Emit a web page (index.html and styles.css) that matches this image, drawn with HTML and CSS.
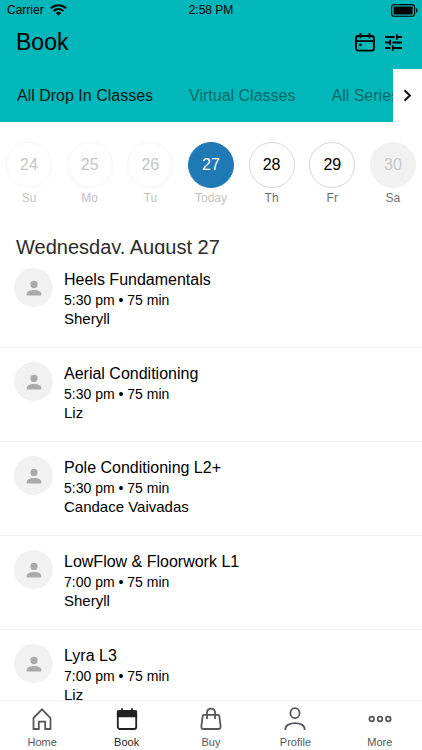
FILE: index.html
```html
<!DOCTYPE html>
<html lang="en">
<head>
    <meta charset="UTF-8">
    <meta name="viewport" content="width=device-width, initial-scale=1.0">
    <title>Book</title>
    <link rel="stylesheet" href="styles.css">
</head>
<body>
    <!-- Shared icon for the instructor avatars -->
    <svg class="icon-defs" aria-hidden="true">
        <symbol id="person" viewBox="0 0 16 16">
            <circle cx="8" cy="4.4" r="3.6"/>
            <path d="M.7 15.4v-1.6c0-2.5 3.6-3.9 7.3-3.9s7.3 1.4 7.3 3.9v1.6z"/>
        </symbol>
    </svg>

    <header class="header">
        <div class="status-bar">
            <div class="carrier">
                <span>Carrier</span>
                <svg width="17" height="12" viewBox="0 0 17 12" fill="none" stroke="#000" stroke-width="2">
                    <path d="M.9 4.3a10.8 10.8 0 0 1 15.2 0M3.6 7.1a6.9 6.9 0 0 1 9.8 0"/>
                    <path d="M8.5 11.8L5.9 9.1a3.7 3.7 0 0 1 5.2 0z" fill="#000" stroke="none"/>
                </svg>
            </div>
            <span class="clock">2:58 PM</span>
            <div class="battery">
                <svg width="27" height="13" viewBox="0 0 27 13">
                    <rect x=".6" y=".6" width="23" height="11.6" rx="2.8" fill="none" stroke="#000" stroke-width="1.1"/>
                    <rect x="2.6" y="2.4" width="19" height="8" rx="1.2"/>
                    <path d="M25 4.2c2 .6 2 3.8 0 4.4z"/>
                </svg>
            </div>
        </div>

        <div class="title-bar">
            <h1>Book</h1>
            <div class="actions">
                <button class="icon-btn" aria-label="Calendar">
                    <svg width="20" height="19" viewBox="0 0 20 19" fill="none" stroke="#000" stroke-width="1.8">
                        <rect x="1" y="3" width="18" height="14.6" rx="2.4"/>
                        <path d="M1 8.2h18M5.5 0v5.2M14.5 0v5.2"/>
                        <circle cx="5.3" cy="11.8" r="1.4" fill="#000" stroke="none"/>
                    </svg>
                </button>
                <button class="icon-btn" aria-label="Filters">
                    <svg width="17" height="17" viewBox="0 0 17 17" fill="none" stroke="#000" stroke-width="1.8">
                        <path d="M0 3h9.5M11.8 3H17M11.8 .3v5.4M0 8.5h5.2M5.2 5.8v5.4M7.6 8.5H17M0 14h5.4M7.8 14H17M7.8 11.3v5.4"/>
                    </svg>
                </button>
            </div>
        </div>

        <nav class="tabs">
            <div class="tab-list">
                <a href="#drop-in" class="tab active">All Drop In Classes</a>
                <a href="#virtual" class="tab">Virtual Classes</a>
                <a href="#series" class="tab">All Series</a>
            </div>
            <button class="tabs-next" aria-label="More tabs">
                <svg width="9" height="13" viewBox="0 0 9 13" fill="none" stroke="#111" stroke-width="2">
                    <path d="M1.5 1.2l5.4 5.3-5.4 5.3"/>
                </svg>
            </button>
        </nav>
    </header>

    <div class="week">
        <button class="day past"><span class="num">24</span><span class="name">Su</span></button>
        <button class="day past"><span class="num">25</span><span class="name">Mo</span></button>
        <button class="day past"><span class="num">26</span><span class="name">Tu</span></button>
        <button class="day today"><span class="num">27</span><span class="name">Today</span></button>
        <button class="day"><span class="num">28</span><span class="name">Th</span></button>
        <button class="day"><span class="num">29</span><span class="name">Fr</span></button>
        <button class="day empty"><span class="num">30</span><span class="name">Sa</span></button>
    </div>

    <h2 class="date-heading">Wednesday, August 27</h2>

    <main class="class-list">
        <article class="class-item">
            <div class="avatar"><svg><use href="#person"/></svg></div>
            <div class="info">
                <h3>Heels Fundamentals</h3>
                <p class="time">5:30 pm • 75 min</p>
                <p class="teacher">Sheryll</p>
            </div>
        </article>
        <article class="class-item">
            <div class="avatar"><svg><use href="#person"/></svg></div>
            <div class="info">
                <h3>Aerial Conditioning</h3>
                <p class="time">5:30 pm • 75 min</p>
                <p class="teacher">Liz</p>
            </div>
        </article>
        <article class="class-item">
            <div class="avatar"><svg><use href="#person"/></svg></div>
            <div class="info">
                <h3>Pole Conditioning L2+</h3>
                <p class="time">5:30 pm • 75 min</p>
                <p class="teacher">Candace Vaivadas</p>
            </div>
        </article>
        <article class="class-item">
            <div class="avatar"><svg><use href="#person"/></svg></div>
            <div class="info">
                <h3>LowFlow &amp; Floorwork L1</h3>
                <p class="time">7:00 pm • 75 min</p>
                <p class="teacher">Sheryll</p>
            </div>
        </article>
        <article class="class-item">
            <div class="avatar"><svg><use href="#person"/></svg></div>
            <div class="info">
                <h3>Lyra L3</h3>
                <p class="time">7:00 pm • 75 min</p>
                <p class="teacher">Liz</p>
            </div>
        </article>
    </main>

    <nav class="bottom-nav">
        <a href="#home" class="nav-item">
            <svg viewBox="0 0 24 24">
                <path d="M3.5 11L12 2.4l8.5 8.6V22h-5.3v-7.4H8.8V22H3.5z"/>
            </svg>
            <span>Home</span>
        </a>
        <a href="#book" class="nav-item active">
            <svg viewBox="0 0 24 24">
                <rect x="2.8" y="4" width="18.4" height="18" rx="2"/>
                <path d="M2.8 4.5h18.4v4.8H2.8z" fill="currentColor"/>
                <path d="M7 1.2v3M17 1.2v3"/>
            </svg>
            <span>Book</span>
        </a>
        <a href="#buy" class="nav-item">
            <svg viewBox="0 0 24 24">
                <path d="M4.9 7.8h14.2c.7 0 1.1.4 1.2 1l1.3 10.6c.2 1.6-.7 2.6-2.2 2.6H4.6c-1.5 0-2.4-1-2.2-2.6L3.7 8.8c.1-.6.5-1 1.2-1z"/>
                <path d="M8 12V5.6C8 3.2 9.7 1.7 12 1.7s4 1.5 4 3.9V12"/>
            </svg>
            <span>Buy</span>
        </a>
        <a href="#profile" class="nav-item">
            <svg viewBox="0 0 24 24">
                <ellipse cx="12" cy="6.2" rx="4.6" ry="5"/>
                <path d="M2.4 23v-1.2c0-3.6 4.6-5.6 9.6-5.6s9.6 2 9.6 5.6V23"/>
            </svg>
            <span>Profile</span>
        </a>
        <a href="#more" class="nav-item">
            <svg viewBox="0 0 24 24">
                <circle cx="3.7" cy="12" r="2.3"/>
                <circle cx="12" cy="12" r="2.3"/>
                <circle cx="20.3" cy="12" r="2.3"/>
            </svg>
            <span>More</span>
        </a>
    </nav>
</body>
</html>
```
FILE: styles.css
```css
* {
    box-sizing: border-box;
}
body {
    margin: 0;
    height: 100vh;
    display: flex;
    flex-direction: column;
    overflow: hidden;
    background: #fff;
    color: #000;
    font-family: "Liberation Sans", Arial, sans-serif;
}
h1, h2, h3, p {
    margin: 0;
    font-weight: normal;
}
button {
    padding: 0;
    border: none;
    background: none;
    color: inherit;
    font-family: inherit;
    cursor: pointer;
}
a {
    color: inherit;
    text-decoration: none;
}
svg {
    display: block;
}
.icon-defs {
    display: none;
}

/* Header */
.header {
    flex: none;
    background: #01b7b9;
}
.status-bar {
    display: grid;
    grid-template-columns: 1fr auto 1fr;
    align-items: center;
    height: 20px;
    padding: 0 4px 0 7px;
    font-size: 12px;
}
.carrier {
    display: flex;
    align-items: center;
    gap: 6px;
}
.clock {
    padding-right: 3px;
}
.battery {
    justify-self: end;
}
.title-bar {
    display: flex;
    align-items: center;
    justify-content: space-between;
    height: 49px;
    padding: 0 20px 4px 16px;
}
.title-bar h1 {
    font-size: 23px;
}
.actions {
    display: flex;
    align-items: center;
    gap: 10px;
}
.tabs {
    display: flex;
    height: 53px;
}
.tab-list {
    flex: 1;
    min-width: 0;
    display: flex;
    align-items: center;
    gap: 36px;
    padding-left: 17px;
    overflow: hidden;
}
.tab {
    flex: none;
    color: #046b6d;
    font-size: 16px;
}
.tab.active {
    color: #001a1a;
}
.tabs-next {
    width: 29px;
    display: flex;
    align-items: center;
    justify-content: center;
    background: #fff;
}

/* Week strip */
.week {
    flex: none;
    display: flex;
    justify-content: space-between;
    padding: 20px 6px 0;
}
.day {
    width: 46px;
    display: flex;
    flex-direction: column;
    align-items: center;
    gap: 2px;
}
.num {
    width: 46px;
    height: 46px;
    border: 1px solid #d6d6d6;
    border-radius: 50%;
    font-size: 16px;
    line-height: 44px;
}
.name {
    color: #707070;
    font-size: 12px;
    line-height: 16px;
}
.past .num {
    border-color: #f5f5f5;
    color: #c6c6c6;
}
.past .name,
.today .name {
    color: #c2c2c2;
}
.today .num {
    border-color: #1e79b4;
    background: #1e79b4;
    color: #fff;
}
.empty .num {
    border-color: #f1f1f1;
    background: #f1f1f1;
    color: #c8c8c8;
}

/* Only the part above the baseline stays visible over the list */
.date-heading {
    flex: none;
    height: 19px;
    margin-top: 29px;
    padding-left: 16px;
    overflow: hidden;
    color: #2b2b2b;
    font-size: 20px;
    line-height: 25px;
}

/* Classes */
.class-list {
    flex: 1;
    min-height: 0;
    overflow: hidden;
}
.class-item {
    display: flex;
    gap: 11px;
    padding: 14px 14px 20px;
    border-bottom: 1px solid #f1f1f1;
}
.avatar {
    width: 39px;
    height: 39px;
    display: flex;
    align-items: center;
    justify-content: center;
    border-radius: 50%;
    background: #f1f1f1;
}
.avatar svg {
    width: 16px;
    height: 16px;
    fill: #aaa;
}
.info {
    padding-top: 2px;
}
.info h3 {
    font-size: 16px;
    line-height: 20px;
}
.time {
    font-size: 14px;
    line-height: 20px;
}
.teacher {
    font-size: 15px;
    line-height: 17px;
}

/* Bottom navigation */
.bottom-nav {
    flex: none;
    display: flex;
    height: 50px;
    border-top: 1px solid #f1f1f1;
    background: #fff;
}
.nav-item {
    flex: 1;
    display: flex;
    flex-direction: column;
    align-items: center;
    gap: 5px;
    padding-top: 6px;
    color: #55565b;
    font-size: 11px;
    line-height: 13px;
}
.nav-item svg {
    width: 24px;
    height: 24px;
    fill: none;
    stroke: currentColor;
    stroke-width: 1.8;
}
.nav-item.active {
    color: #212226;
}
```
